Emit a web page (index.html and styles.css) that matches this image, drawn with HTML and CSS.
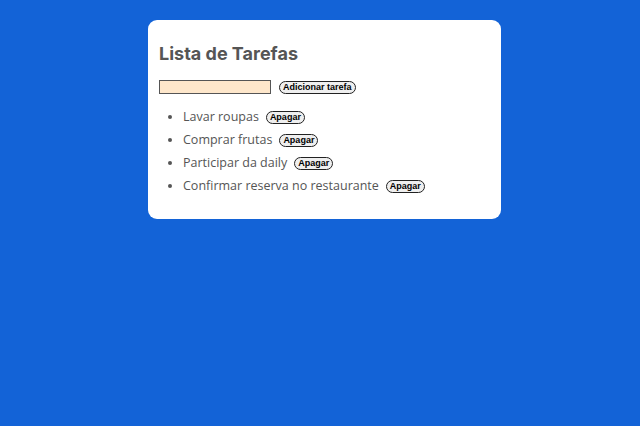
FILE: index.html
```html
<!DOCTYPE html>
<html lang="pt-BR">
<head>
<meta charset="utf-8">
<title>Lista de Tarefas</title>
<link rel="stylesheet" href="styles.css">
</head>
<body>
<main class="card">
  <h1 class="title">Lista de Tarefas</h1>
  <div class="form">
    <input class="task-input" type="text">
    <button class="btn">Adicionar tarefa</button>
  </div>
  <ul class="list">
    <li class="item"><span>Lavar roupas</span><button class="btn">Apagar</button></li>
    <li class="item"><span>Comprar frutas</span><button class="btn">Apagar</button></li>
    <li class="item"><span>Participar da daily</span><button class="btn">Apagar</button></li>
    <li class="item"><span>Confirmar reserva no restaurante</span><button class="btn">Apagar</button></li>
  </ul>
</main>
</body>
</html>
```
FILE: styles.css
```css
html, body {
  margin: 0;
  padding: 0;
  background: #1363d7;
  height: 100%;
}
body {
  font-family: "Open Sans", "DejaVu Sans", sans-serif;
  color: #555;
}
.card {
  box-sizing: border-box;
  width: 353px;
  margin: 20px 0 0 148px;
  background: #fff;
  border-radius: 9px;
  padding: 21px 11px 22px;
}
.title {
  margin: 0;
  font-family: "Inter", sans-serif;
  font-size: 18px;
  font-weight: 700;
  line-height: 25px;
  color: #555;
}
.form {
  display: flex;
  align-items: center;
  gap: 8px;
  margin-top: 14px;
}
.task-input {
  box-sizing: border-box;
  width: 112px;
  height: 14px;
  margin: 0;
  padding: 0;
  border: 1px solid #555;
  background: #fee7cb;
}
.btn {
  font-family: "Liberation Sans", Arial, sans-serif;
  font-weight: 700;
  font-size: 9px;
  color: #000;
  background: #efefef;
  border: 1px solid #222;
  border-radius: 8px;
  padding: 0 3px;
  height: 13px;
  line-height: 11px;
}
.list {
  margin: 11px 0 0;
  padding-left: 24px;
  list-style: disc;
}
.item {
  font-size: 12.5px;
  line-height: 23px;
  color: #555;
}
.item span {
  margin-right: 7px;
}
.item .btn {
  vertical-align: middle;
}
.item::marker {
  color: #555;
}
```
